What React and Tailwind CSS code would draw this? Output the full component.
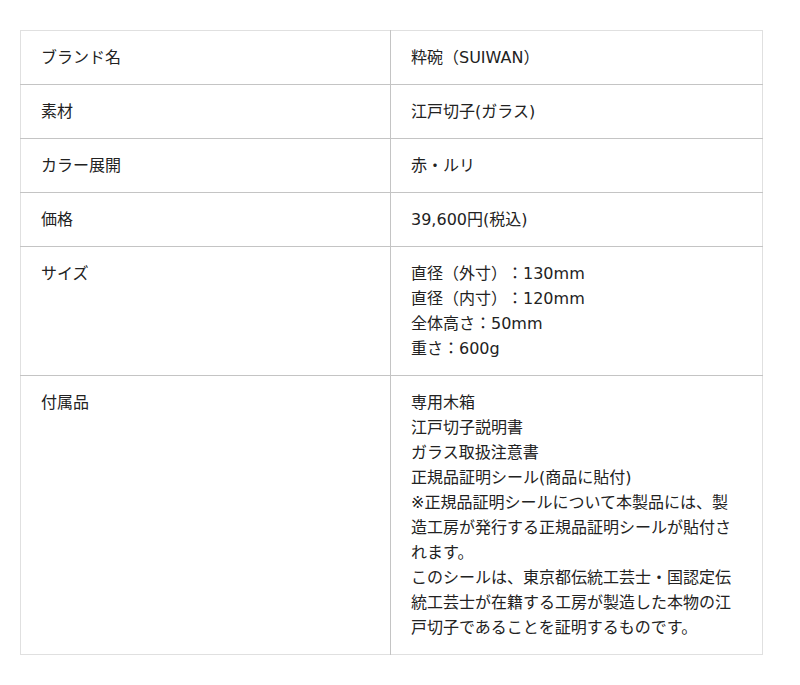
import React from 'react';

const rows = [
  { label: 'ブランド名', value: ['粋碗（SUIWAN）'] },
  { label: '素材', value: ['江戸切子(ガラス)'] },
  { label: 'カラー展開', value: ['赤・ルリ'] },
  { label: '価格', value: ['39,600円(税込)'] },
  {
    label: 'サイズ',
    value: ['直径（外寸）：130mm', '直径（内寸）：120mm', '全体高さ：50mm', '重さ：600g'],
  },
  {
    label: '付属品',
    value: [
      '専用木箱',
      '江戸切子説明書',
      'ガラス取扱注意書',
      '正規品証明シール(商品に貼付)',
      '※正規品証明シールについて本製品には、製造工房が発行する正規品証明シールが貼付されます。',
      'このシールは、東京都伝統工芸士・国認定伝統工芸士が在籍する工房が製造した本物の江戸切子であることを証明するものです。',
    ],
  },
];

export default function App() {
  return (
    <div className="min-h-[685px] bg-white pt-[30px] pl-[20px] font-['DejaVu_Sans','Noto_Sans_CJK_JP',sans-serif] text-[16px] leading-[25px] text-[#222] [text-spacing-trim:space-all]">
      <table className="w-[743px] border-collapse border border-[#e0e0e0] table-fixed">
        <tbody>
          {rows.map((r, i) => (
            <tr key={i} className="border-t border-[#c4c4c4] first:border-t-[#e0e0e0]">
              <td className="w-[370px] align-top px-[20px] py-[14px] border-r border-[#c4c4c4]">
                {r.label}
              </td>
              <td className="align-top px-[20px] py-[14px]">
                {r.value.map((line, j) => (
                  <div key={j}>{line}</div>
                ))}
              </td>
            </tr>
          ))}
        </tbody>
      </table>
    </div>
  );
}
